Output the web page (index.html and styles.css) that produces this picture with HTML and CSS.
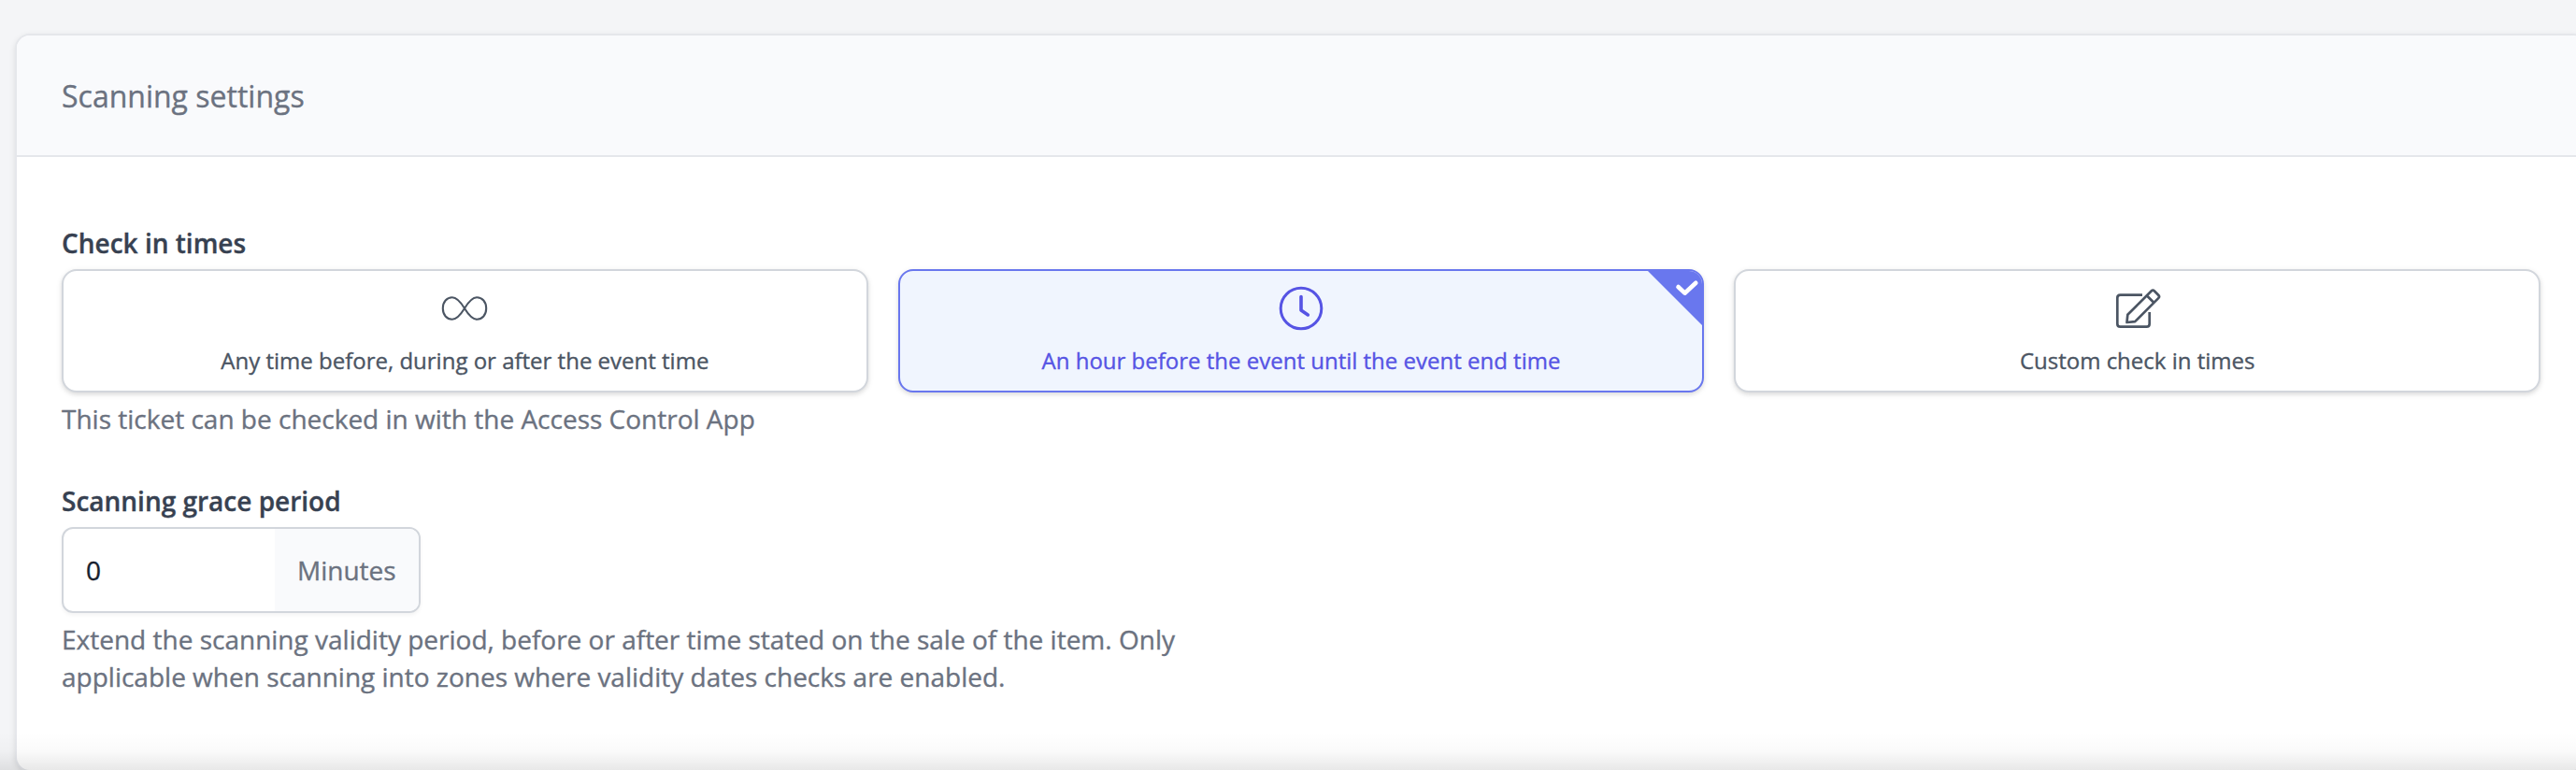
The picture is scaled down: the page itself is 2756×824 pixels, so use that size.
FILE: index.html
```html
<!DOCTYPE html>
<html lang="en">
<head>
<meta charset="utf-8">
<title>Scanning settings</title>
<link rel="stylesheet" href="styles.css">
</head>
<body>
<main class="page">
  <section class="card">
    <header class="card-header"><h2 class="card-title">Scanning settings</h2></header>
    <div class="card-body">
      <div class="field">
        <h3 class="label">Check in times</h3>
        <div class="options">
          <button class="option" type="button">
            <svg class="icon" viewBox="0 0 56 56" stroke-width="2.1"><path d="M28 28C24 21.500 20.200 16.300 14.800 16.300C9 16.300 4.800 21 4.800 28S9 39.700 14.800 39.700C20.200 39.700 24 34.500 28 28C32 21.500 35.800 16.300 41.200 16.300C47 16.300 51.200 21 51.200 28S47 39.700 41.200 39.700C35.800 39.700 32 34.500 28 28Z"/></svg>
            <span class="option-text">Any time before, during or after the event time</span>
          </button>
          <button class="option selected" type="button">
            <svg class="icon" viewBox="0 0 56 56" stroke-width="3"><circle cx="28" cy="28" r="21.800"/><path stroke-width="3.600" d="M28 15.500V30L35.300 34.900"/></svg>
            <span class="option-text">An hour before the event until the event end time</span>
            <svg class="corner" viewBox="0 0 58 58"><path class="corner-fill" d="M0 0H58V58Z"/><path class="corner-check" d="M32.500 17L39.500 23.700L51.300 12.800"/></svg>
          </button>
          <button class="option" type="button">
            <svg class="icon" viewBox="0 0 56 56" stroke-width="2.700"><path stroke-linecap="butt" d="M33 13.600H9.500Q6.300 13.600 6.300 16.800V44.500Q6.300 47.700 9.500 47.700H37.500Q40.700 47.700 40.700 44.500V32"/><path d="M16.500 43L17.300 34.800L42.600 9.500Q44.300 7.800 46 9.500L50.200 13.700Q51.900 15.400 50.200 17.100L25.200 42.100ZM38 14.500L45 21.500"/></svg>
            <span class="option-text">Custom check in times</span>
          </button>
        </div>
        <p class="help">This ticket can be checked in with the Access Control App</p>
      </div>
      <div class="field">
        <h3 class="label">Scanning grace period</h3>
        <div class="input-group"><span class="value">0</span><span class="unit">Minutes</span></div>
        <p class="help">Extend the scanning validity period, before or after time stated on the sale of the item. Only applicable when scanning into zones where validity dates checks are enabled.</p>
      </div>
    </div>
  </section>
  <div class="fade"></div>
</main>
</body>
</html>
```
FILE: styles.css
```css
* { box-sizing: border-box; }
body { margin: 0; font-family: "Open Sans", sans-serif; color: #6b7280; -webkit-text-stroke: .35px currentColor; }
h2, h3, p { margin: 0; }
.page { position: relative; height: 824px; padding: 38px 0 0 18px; overflow: hidden; background: #f4f5f7; }
.card { width: 2748px; height: 786px; border-radius: 14px; background: #fff; box-shadow: 0 0 0 2px #e5e7eb, 0 2px 6px 2px rgba(0, 0, 0, .1); }
.card-header { height: 130px; padding: 41px 48px; border-bottom: 2px solid #e5e7eb; border-radius: 14px 14px 0 0; background: #f9fafc; }
.card-title { font-size: 32px; line-height: 48px; font-weight: 400; }
.card-body { display: flex; flex-direction: column; gap: 48px; padding: 72px 48px 0; }
.label { margin-bottom: 8px; font-size: 28px; line-height: 40px; font-weight: 600; color: #374151; }
.options { display: grid; grid-template-columns: repeat(3, 1fr); gap: 32px; }
.option { position: relative; display: flex; flex-direction: column; align-items: center; gap: 10px; height: 132px; padding: 12px; border: 2px solid #d2d6dc; border-radius: 16px; background: #fff; box-shadow: 0 2px 6px rgba(0, 0, 0, .1), 0 2px 4px rgba(0, 0, 0, .06); color: #4b5563; font: inherit; -webkit-text-stroke: inherit; }
.selected { border-color: #6977ee; background: #f0f5fe; color: #5654e4; }
.icon { flex: none; width: 56px; height: 56px; fill: none; stroke: currentColor; stroke-linecap: round; stroke-linejoin: round; }
.option-text { font-size: 24px; line-height: 36px; -webkit-text-stroke: .35px currentColor; }
.corner { position: absolute; top: 0; right: 0; width: 58px; height: 58px; border-top-right-radius: 14px; }
.corner-fill { fill: #6977ee; }
.corner-check { fill: none; stroke: #fff; stroke-width: 4.600; stroke-linecap: round; stroke-linejoin: round; }
.help { max-width: 1240px; margin-top: 8px; font-size: 28px; line-height: 40px; }
.input-group { display: flex; width: 384px; height: 92px; border: 2px solid #d2d6dc; border-radius: 12px; overflow: hidden; box-shadow: 0 2px 4px rgba(0, 0, 0, .05); font-size: 28px; line-height: 88px; }
.value { flex: 1; padding-left: 24px; color: #161e2e; }
.unit { width: 154px; padding-left: 24px; background: #f9fafc; }
.fade { position: absolute; left: 0; right: 0; bottom: 0; height: 40px; background: linear-gradient(to bottom, rgba(0, 0, 0, 0), rgba(0, 0, 0, .02) 50%, rgba(0, 0, 0, .09)); }
```
